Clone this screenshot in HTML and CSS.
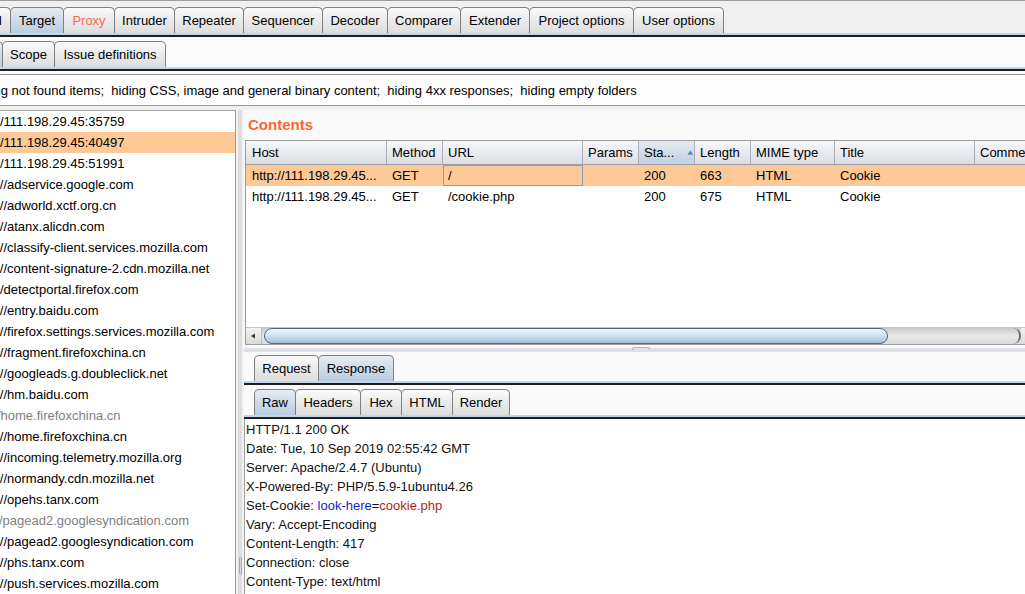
FILE: index.html
```html
<!DOCTYPE html>
<html>
<head>
<meta charset="utf-8">
<title>Burp Suite - Target</title>
<link rel="stylesheet" href="styles.css">
</head>
<body>
<div class="app">
  <div class="maintabs tabrow">
    <div class="tab t-dash">Dashboard</div>
    <div class="tab sel t-target">Target</div>
    <div class="tab t-proxy proxy">Proxy</div>
    <div class="tab t-intr">Intruder</div>
    <div class="tab t-rep">Repeater</div>
    <div class="tab t-seq">Sequencer</div>
    <div class="tab t-dec">Decoder</div>
    <div class="tab t-cmp">Comparer</div>
    <div class="tab t-ext">Extender</div>
    <div class="tab t-proj">Project options</div>
    <div class="tab t-user">User options</div>
  </div>
  <div class="tabline"></div>

  <div class="subarea">
    <div class="tabrow subtabs">
      <div class="tab sel t-site">Site map</div>
      <div class="tab t-scope">Scope</div>
      <div class="tab t-issue">Issue definitions</div>
    </div>
    <div class="tabline"></div>
    <div class="filterwrap">
      <div class="filter"><span class="filtertext">Filter: Hiding not found items;  hiding CSS, image and general binary content;  hiding 4xx responses;  hiding empty folders</span></div>
    </div>
  </div>

  <div class="main">
    <div class="tree">
      <div class="node"><span class="http">http://111.198.29.45:35759</span></div>
      <div class="node selrow"><span class="http">http://111.198.29.45:40497</span></div>
      <div class="node"><span class="http">http://111.198.29.45:51991</span></div>
      <div class="node"><span class="https">https://adservice.google.com</span></div>
      <div class="node"><span class="https">https://adworld.xctf.org.cn</span></div>
      <div class="node"><span class="https">https://atanx.alicdn.com</span></div>
      <div class="node"><span class="https">https://classify-client.services.mozilla.com</span></div>
      <div class="node"><span class="https">https://content-signature-2.cdn.mozilla.net</span></div>
      <div class="node"><span class="http">http://detectportal.firefox.com</span></div>
      <div class="node"><span class="https">https://entry.baidu.com</span></div>
      <div class="node"><span class="https">https://firefox.settings.services.mozilla.com</span></div>
      <div class="node"><span class="https">https://fragment.firefoxchina.cn</span></div>
      <div class="node"><span class="https">https://googleads.g.doubleclick.net</span></div>
      <div class="node"><span class="https">https://hm.baidu.com</span></div>
      <div class="node gray"><span class="g1">http://home.firefoxchina.cn</span></div>
      <div class="node"><span class="https">https://home.firefoxchina.cn</span></div>
      <div class="node"><span class="https">https://incoming.telemetry.mozilla.org</span></div>
      <div class="node"><span class="https">https://normandy.cdn.mozilla.net</span></div>
      <div class="node"><span class="https">https://opehs.tanx.com</span></div>
      <div class="node gray"><span class="g2">http://pagead2.googlesyndication.com</span></div>
      <div class="node"><span class="https">https://pagead2.googlesyndication.com</span></div>
      <div class="node"><span class="https">https://phs.tanx.com</span></div>
      <div class="node"><span class="https">https://push.services.mozilla.com</span></div>
    </div>

    <div class="vsplit"><div class="vgrip"></div></div>

    <div class="right">
      <div class="heading">Contents</div>
      <div class="table">
        <div class="cols thead">
          <div class="th">Host</div>
          <div class="th">Method</div>
          <div class="th">URL</div>
          <div class="th">Params</div>
          <div class="th sorted">Sta...<svg class="sortarrow" width="9" height="7" viewBox="0 0 9 7"><path d="M0.5 6.5 L4.5 0.5 L8.5 6.5 Z" fill="#5d8bbf"/></svg></div>
          <div class="th">Length</div>
          <div class="th">MIME type</div>
          <div class="th">Title</div>
          <div class="th">Comment</div>
        </div>
        <div class="tbody">
          <div class="cols tr selrow">
            <div class="td">http://111.198.29.45...</div>
            <div class="td">GET</div>
            <div class="td focus">/</div>
            <div class="td"></div>
            <div class="td">200</div>
            <div class="td">663</div>
            <div class="td">HTML</div>
            <div class="td">Cookie</div>
            <div class="td"></div>
          </div>
          <div class="cols tr">
            <div class="td">http://111.198.29.45...</div>
            <div class="td">GET</div>
            <div class="td">/cookie.php</div>
            <div class="td"></div>
            <div class="td">200</div>
            <div class="td">675</div>
            <div class="td">HTML</div>
            <div class="td">Cookie</div>
            <div class="td"></div>
          </div>
        </div>
        <div class="hscroll">
          <div class="sbtn"><svg width="16" height="16" viewBox="0 0 16 16"><path d="M5 8 L9 5.5 L9 10.5 Z" fill="#333"/></svg></div>
          <div class="thumb"></div>
          <div class="track"></div>
          <div class="sbtn"><svg width="16" height="16" viewBox="0 0 16 16"><path d="M10 8 L6 5.5 L6 10.5 Z" fill="#333"/></svg></div>
        </div>
      </div>
      <div class="hsplit"><div class="hgrip"></div></div>

      <div class="tabrow paneltabs first">
        <div class="tab t-req">Request</div>
        <div class="tab sel t-resp">Response</div>
      </div>
      <div class="tabline"></div>
      <div class="tabrow paneltabs">
        <div class="tab sel t-raw">Raw</div>
        <div class="tab t-hdr">Headers</div>
        <div class="tab t-hex">Hex</div>
        <div class="tab t-html">HTML</div>
        <div class="tab t-render">Render</div>
      </div>
      <div class="tabline"></div>
      <div class="resp">
        <div class="line">HTTP/1.1 200 OK</div>
        <div class="line">Date: Tue, 10 Sep 2019 02:55:42 GMT</div>
        <div class="line">Server: Apache/2.4.7 (Ubuntu)</div>
        <div class="line">X-Powered-By: PHP/5.5.9-1ubuntu4.26</div>
        <div class="line">Set-Cookie: <span class="ck-name">look-here</span>=<span class="ck-val">cookie.php</span></div>
        <div class="line">Vary: Accept-Encoding</div>
        <div class="line">Content-Length: 417</div>
        <div class="line">Connection: close</div>
        <div class="line">Content-Type: text/html</div>
      </div>
    </div>
  </div>
</div>
</body>
</html>
```

FILE: styles.css
```css
* { box-sizing: border-box; }

html, body {
  margin: 0;
  padding: 0;
}

body {
  width: 1025px;
  height: 594px;
  overflow: hidden;
  font-family: "Liberation Sans", Arial, sans-serif;
  font-size: 13px;
  color: #000;
  background: #f0f0f0;
}

.app {
  display: flex;
  flex-direction: column;
  height: 594px;
}

/* ---------- tabs ---------- */
.tabrow {
  display: flex;
  align-items: flex-end;
  white-space: nowrap;
}

.tab {
  flex: none;
  height: 26px;
  line-height: 24px;
  padding-top: 1px;
  text-align: center;
  border: 1px solid #7f7f7f;
  border-bottom: none;
  border-radius: 5px 5px 0 0;
  background: linear-gradient(#fbfbfb, #e9e9e9 55%, #dedede);
  margin-right: -1px;
  overflow: hidden;
}

.tab.sel {
  background: linear-gradient(#e7ecf2, #cfdbe7 50%, #b8cde2);
}

.tabline {
  flex: none;
  height: 4px;
  background: linear-gradient(#c3d5e8 0 2px, #1e1e1e 2px 4px);
}

.maintabs {
  height: 33px;
  border-top: 1px solid #9c9c9c;
  background: #f0f0f0;
}

.t-dash { width: 82px; margin-left: -71px; }
.t-target { width: 54px; }
.t-proxy { width: 52px; }
.t-intr { width: 61px; }
.t-rep { width: 70px; }
.t-seq { width: 80px; }
.t-dec { width: 66px; }
.t-cmp { width: 74px; }
.t-ext { width: 70px; }
.t-proj { width: 105px; }
.t-user { width: 91px; }

.proxy { color: #f76b4c; }

.subarea {
  background: #fbfbfb;
}

.subtabs {
  padding-top: 4px;
  height: 30px;
}

.t-site { width: 70px; margin-left: -67px; }
.t-scope { width: 53px; }
.t-issue { width: 112px; }

.filterwrap {
  padding-top: 3px;
  background: #fbfbfb;
}

.filter {
  height: 32px;
  border-top: 1px solid #8e8e8e;
  border-bottom: 1px solid #9a9a9a;
  background: #fdfdfd;
  line-height: 29px;
  padding-top: 1px;
  white-space: pre;
  overflow: hidden;
}

.filtertext {
  margin-left: -65px;
}

/* ---------- main split ---------- */
.main {
  flex: 1;
  display: flex;
  margin-top: 4px;
  min-height: 0;
}

.tree {
  flex: none;
  width: 236px;
  background: #fff;
  border-top: 1px solid #a3a3a3;
  border-right: 1px solid #9a9a9a;
  overflow: hidden;
}

.node {
  height: 21px;
  line-height: 20px;
  padding-top: 1px;
  white-space: nowrap;
  overflow: hidden;
}

.node.gray { color: #808080; }

.selrow { background: #ffc997; }

.https { margin-left: -32px; }
.http { margin-left: -29px; }
.g1 { margin-left: -32px; }
.g2 { margin-left: -30px; }

.vsplit {
  flex: none;
  width: 8px;
  background: linear-gradient(to right, #f3f3f3 0 2px, #dedede 2px 6px, #f3f3f3 6px);
  display: flex;
  flex-direction: column;
  justify-content: flex-end;
  align-items: center;
  padding-bottom: 19px;
}

.vgrip {
  width: 3px;
  height: 18px;
  border: 1px solid #a8a8a8;
  border-radius: 2px;
  background: #d6d6d6;
}

.right {
  flex: 1;
  min-width: 0;
  display: flex;
  flex-direction: column;
  background: #fafafa;
}

.heading {
  height: 30px;
  line-height: 30px;
  padding-left: 4px;
  font-size: 15px;
  font-weight: bold;
  color: #ff6633;
}

/* ---------- table ---------- */
.table {
  flex: none;
  width: 792px;
  height: 205px;
  margin-left: 1px;
  display: flex;
  flex-direction: column;
  border: 1px solid #9a9a9a;
  border-right: none;
  background: #fff;
  overflow: hidden;
}

.cols {
  display: grid;
  grid-template-columns: 141px 56px 140px 56px 56px 56px 84px 140px 130px;
}

.thead {
  height: 24px;
  border-bottom: 1px solid #9ca0a8;
  background: linear-gradient(#f6f7f9, #e6e8ed 60%, #dcdee4);
}

.th {
  height: 23px;
  line-height: 23px;
  padding-left: 5px;
  border-right: 1px solid #a9adb5;
  white-space: nowrap;
  overflow: hidden;
  display: flex;
  align-items: center;
}

.th:first-child,
.td:first-child {
  padding-left: 6px;
}

.th.sorted {
  background: linear-gradient(#e3ebf3, #cddbe8 60%, #bfd1e3);
}

.sortarrow {
  margin-left: 13px;
}

.tbody {
  flex: 1;
}

.tr {
  height: 21px;
  line-height: 20px;
}

.td {
  padding-left: 5px;
  padding-top: 1px;
  white-space: nowrap;
  overflow: hidden;
}

.td.focus {
  box-shadow: inset 0 0 0 1px #889db6;
}

.hscroll {
  flex: none;
  height: 17px;
  display: flex;
  background: linear-gradient(#c9c9c9, #e9e9e9 50%, #d9d9d9);
  border-top: 1px solid #c4c4c4;
}

.sbtn {
  flex: none;
  width: 16px;
  height: 16px;
  background: linear-gradient(#f2f2f2, #dadada);
  border-right: 1px solid #b8b8b8;
}

.thumb {
  flex: none;
  width: 624px;
  margin-left: 2px;
  height: 16px;
  border: 1px solid #4c6884;
  border-radius: 9px;
  background: linear-gradient(#f1f6fb, #d3e2f0 45%, #b4cbe2 80%, #a3bcd6);
}

.track {
  flex: 1;
  border-right: 2px solid #6b6b6b;
  border-radius: 0 8px 8px 0;
}

.hsplit {
  flex: none;
  height: 7px;
  background: linear-gradient(#fafafa 0 3px, #e0e1e8 3px);
  padding-left: 388px;
  padding-top: 2px;
}

.hgrip {
  width: 18px;
  height: 3px;
  border: 1px solid #b6b7bf;
  border-bottom: none;
  border-radius: 2px 2px 0 0;
}

.paneltabs {
  padding-left: 10px;
  padding-top: 4px;
  height: 30px;
}

.paneltabs.first {
  padding-top: 3px;
  height: 29px;
}

.t-req { width: 65px; }
.t-resp { width: 76px; }
.t-raw { width: 42px; }
.t-hdr { width: 66px; }
.t-hex { width: 42px; }
.t-html { width: 52px; }
.t-render { width: 58px; }

/* ---------- response ---------- */
.resp {
  flex: 1;
  background: #fff;
  border-left: 1px solid #a0a0a0;
  padding: 1px 0 0 1px;
  overflow: hidden;
}

.line {
  height: 19px;
  line-height: 19px;
  white-space: nowrap;
  color: #111;
}

.ck-name { color: #1d1dbd; }
.ck-val { color: #b01e1e; }
```
